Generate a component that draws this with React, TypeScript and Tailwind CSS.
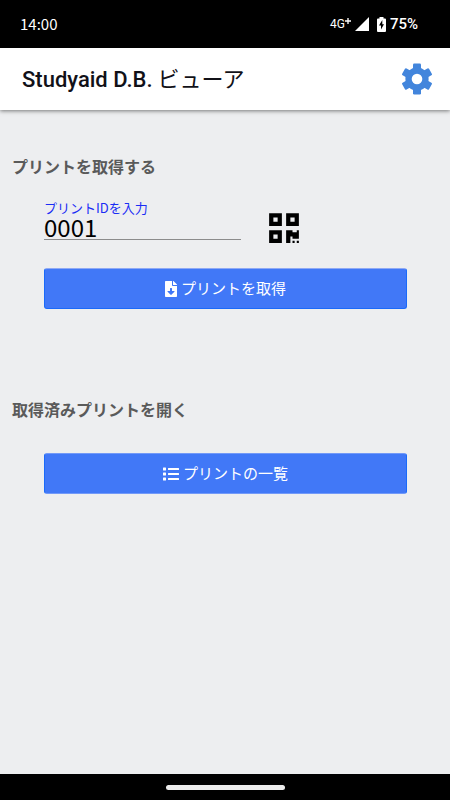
import React, { useState } from 'react';
import { FaFileDownload, FaList, FaQrcode } from 'react-icons/fa';

const GearIcon: React.FC = () => (
  <svg viewBox="0 0 32 32" className="w-8 h-8" fill="#4285dc">
    <circle cx="16" cy="16" r="11.6" />
    <rect x="12" y="0.5" width="8" height="31" rx="1.2" />
    <rect x="12" y="0.5" width="8" height="31" rx="1.2" transform="rotate(60 16 16)" />
    <rect x="12" y="0.5" width="8" height="31" rx="1.2" transform="rotate(120 16 16)" />
    <circle cx="16" cy="16" r="5.3" fill="#fff" />
  </svg>
);

const StatusBar: React.FC = () => (
  <div className="h-12 shrink-0 bg-black text-white flex items-center justify-between pl-5 pr-8">
    <span className="text-[15px] leading-6">14:00</span>
    <div className="flex items-center">
      <span className="text-xs font-['Roboto',sans-serif]">4G</span>
      <svg viewBox="0 0 6 6" className="w-1.5 h-1.5 mb-1.5">
        <path d="M3 0v6M0 3h6" stroke="#fff" strokeWidth="1.3" />
      </svg>
      <svg viewBox="0 0 14 14" className="w-3.5 h-3.5 ml-1 mr-2">
        <path d="M14 0v14H0z" fill="#fff" />
      </svg>
      <svg viewBox="0 0 9 15" className="w-[9px] h-[15px] mr-1">
        <path d="M2.5 0h4v1.5H8a1 1 0 0 1 1 1V14a1 1 0 0 1-1 1H1a1 1 0 0 1-1-1V2.5a1 1 0 0 1 1-1h1.5z" fill="#fff" />
        <path d="M5.3 3L2 8.5h2V12.5L7 7.3H5.3z" fill="#000" />
      </svg>
      <span className="text-[15px] leading-6 font-medium font-['Roboto',sans-serif]">75%</span>
    </div>
  </div>
);

const App: React.FC = () => {
  const [printId, setPrintId] = useState('0001');

  return (
    <div className="min-h-screen flex flex-col bg-[#edeef0] font-['Noto_Sans_CJK_JP',sans-serif]">
      <StatusBar />

      <header className="h-[62px] shrink-0 bg-white flex items-center justify-between pl-[22px] pr-[17px] shadow-[0_1px_4px_rgba(0,0,0,0.5)]">
        <h1 className="text-[22px] leading-7 pb-0.5 text-[#111118]">
          <span className="font-medium font-['Roboto',sans-serif]">Studyaid D.B.</span> ビューア
        </h1>
        <button type="button" aria-label="設定">
          <GearIcon />
        </button>
      </header>

      <main className="flex-1">
        <section className="pt-11">
          <h2 className="pl-3 text-base leading-6 font-bold text-[#5a5a5a]">プリントを取得する</h2>
          <div className="pl-11 pr-[43px] pt-[22px]">
            <div className="flex items-end">
              <div className="flex flex-col w-[197px]">
                <label htmlFor="print-id" className="text-[13px] leading-4 text-[#1a2df5]">
                  プリントIDを入力
                </label>
                <input
                  id="print-id"
                  type="text"
                  value={printId}
                  onChange={(e) => setPrintId(e.target.value)}
                  className="w-full h-6 pb-0.5 text-2xl leading-6 text-black border-b border-[#8c8c8c] focus:outline-none"
                />
              </div>
              <button type="button" aria-label="QRコードを読み取る" className="ml-7 -mb-[5px]">
                <FaQrcode className="w-[30px] h-[34px]" />
              </button>
            </div>
            <button
              type="button"
              className="mt-7 w-full h-[41px] flex items-center justify-center gap-1 rounded-[3px] bg-[#4178f7] border border-[#1a6afa] border-t-[#8fa9f5] text-white text-[15px]"
            >
              <FaFileDownload className="w-3 h-4" />
              プリントを取得
            </button>
          </div>
        </section>

        <section className="pt-22">
          <h2 className="pl-3 text-base leading-6 font-bold text-[#5a5a5a]">取得済みプリントを開く</h2>
          <div className="pl-11 pr-[43px] pt-8">
            <button
              type="button"
              className="w-full h-[41px] flex items-center justify-center gap-1 rounded-[3px] bg-[#4178f7] border border-[#1a6afa] border-y-[#7299f8] text-white text-[15px]"
            >
              <FaList size={16} />
              プリントの一覧
            </button>
          </div>
        </section>
      </main>

      <footer className="h-[26px] shrink-0 bg-black flex items-center justify-center">
        <div className="w-[119px] h-[5px] rounded-full bg-[#ececec]" />
      </footer>
    </div>
  );
};

export default App;
